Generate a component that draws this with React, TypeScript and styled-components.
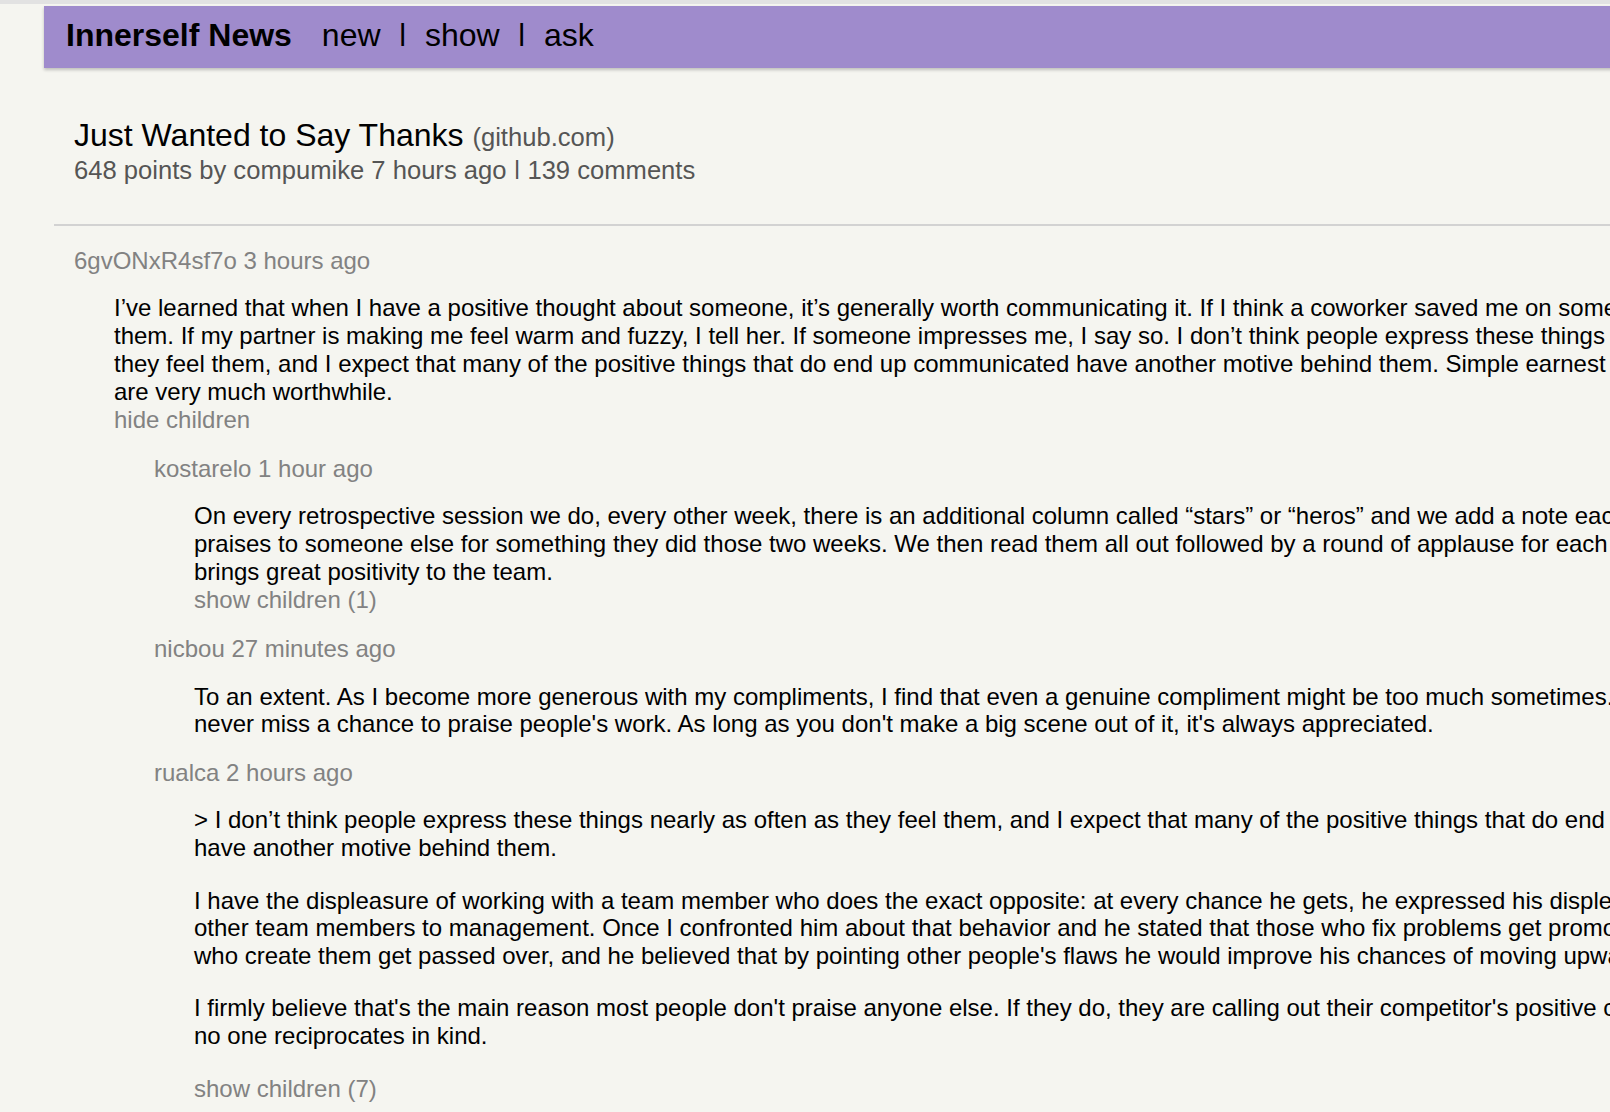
import React from "react";
import styled, { createGlobalStyle } from "styled-components";

const GlobalStyle = createGlobalStyle`
  html, body {
    margin: 0;
    padding: 0;
    overflow: hidden;
    background: #f5f5f0;
  }
  body {
    font-family: "Liberation Sans", Arial, Helvetica, sans-serif;
    color: #000;
  }
  a {
    color: inherit;
    text-decoration: none;
  }
`;

const TopStrip = styled.div`
  height: 4px;
  margin-bottom: 2px;
  background: #e2e2e2;
`;

const Main = styled.div`
  margin-left: 44px;
  width: 1800px;
`;

const Header = styled.header`
  box-sizing: border-box;
  height: 62px;
  padding: 11px 0 0 22px;
  background: #9f8bcc;
  box-shadow: 0 2px 3px rgba(0, 0, 0, 0.22);
  font-size: 32px;
  white-space: nowrap;
`;

const Brand = styled.a`
  font-weight: bold;
  margin-right: 30px;
`;

const NavLink = styled.a``;

/* The bar glyph is shortened so it stands on the baseline, as in the reference font. */
const Sep = styled.span<{ $space?: number }>`
  display: inline-block;
  transform-origin: 50% 0.19em;
  transform: scaleY(0.77);
  margin: 0 ${(p) => p.$space ?? 0}px;
`;

const Story = styled.section`
  padding: 49px 0 0 30px;
`;

const Title = styled.div`
  font-size: 32px;
`;

const Domain = styled.span`
  font-size: 25.6px;
  color: #555;
`;

const StoryMeta = styled.div`
  margin-top: 2px;
  font-size: 25.6px;
  color: #555;
`;

const Divider = styled.hr`
  margin: 39px 0 0 10px;
  height: 0;
  border: 0;
  border-top: 2px solid #d2d2d2;
`;

const Thread = styled.div`
  padding: 0 31px 0 30px;
  font-size: 24px;
  line-height: 27.7px;
`;

const CommentBox = styled.div`
  margin-top: 20.7px;
`;

const CommentMeta = styled.div`
  color: #828282;
`;

const CommentBody = styled.div`
  margin: 20px 0 0 40px;
  color: #000;

  p {
    margin: 24.8px 0;
  }
`;

const Toggle = styled.a`
  display: block;
  margin: 1px 0 0 40px;
  color: #828282;
`;

const Children = styled.div`
  margin-left: 80px;
`;

type CommentData = {
  user: string;
  age: string;
  paragraphs: string[];
  toggle?: string;
  children?: CommentData[];
};

const comments: CommentData[] = [
  {
    user: "6gvONxR4sf7o",
    age: "3 hours ago",
    paragraphs: [
      "I’ve learned that when I have a positive thought about someone, it’s generally worth communicating it. If I think a coworker saved me on something, I thank them. If my partner is making me feel warm and fuzzy, I tell her. If someone impresses me, I say so. I don’t think people express these things nearly as often as they feel them, and I expect that many of the positive things that do end up communicated have another motive behind them. Simple earnest words of thanks are very much worthwhile.",
    ],
    toggle: "hide children",
    children: [
      {
        user: "kostarelo",
        age: "1 hour ago",
        paragraphs: [
          "On every retrospective session we do, every other week, there is an additional column called “stars” or “heros” and we add a note each, giving some praises to someone else for something they did those two weeks. We then read them all out followed by a round of applause for each one, which really brings great positivity to the team.",
        ],
        toggle: "show children (1)",
      },
      {
        user: "nicbou",
        age: "27 minutes ago",
        paragraphs: [
          "To an extent. As I become more generous with my compliments, I find that even a genuine compliment might be too much sometimes. That said, I still never miss a chance to praise people's work. As long as you don't make a big scene out of it, it's always appreciated.",
        ],
      },
      {
        user: "rualca",
        age: "2 hours ago",
        paragraphs: [
          "> I don’t think people express these things nearly as often as they feel them, and I expect that many of the positive things that do end up communicated have another motive behind them.",
          "I have the displeasure of working with a team member who does the exact opposite: at every chance he gets, he expressed his displeasure with the other team members to management. Once I confronted him about that behavior and he stated that those who fix problems get promoted while those who create them get passed over, and he believed that by pointing other people's flaws he would improve his chances of moving upwards.",
          "I firmly believe that's the main reason most people don't praise anyone else. If they do, they are calling out their competitor's positive contributions while no one reciprocates in kind.",
        ],
        toggle: "show children (7)",
      },
    ],
  },
];

function Comment({ data }: { data: CommentData }) {
  const [first, ...rest] = data.paragraphs;
  return (
    <CommentBox>
      <CommentMeta>
        {data.user} {data.age}
      </CommentMeta>
      <CommentBody>
        {first}
        {rest.map((para, i) => (
          <p key={i}>{para}</p>
        ))}
      </CommentBody>
      {data.toggle && <Toggle href="#">{data.toggle}</Toggle>}
      {data.children && (
        <Children>
          {data.children.map((c) => (
            <Comment key={c.user} data={c} />
          ))}
        </Children>
      )}
    </CommentBox>
  );
}

export default function App() {
  return (
    <>
      <GlobalStyle />
      <TopStrip />
      <Main>
        <Header>
          <Brand href="#">Innerself News</Brand>
          <NavLink href="#">new</NavLink>
          <Sep $space={18}>|</Sep>
          <NavLink href="#">show</NavLink>
          <Sep $space={18}>|</Sep>
          <NavLink href="#">ask</NavLink>
        </Header>
        <Story>
          <Title>
            Just Wanted to Say Thanks <Domain>(github.com)</Domain>
          </Title>
          <StoryMeta>
            648 points by compumike 7 hours ago <Sep>|</Sep> 139 comments
          </StoryMeta>
        </Story>
        <Divider />
        <Thread>
          {comments.map((c) => (
            <Comment key={c.user} data={c} />
          ))}
        </Thread>
      </Main>
    </>
  );
}
